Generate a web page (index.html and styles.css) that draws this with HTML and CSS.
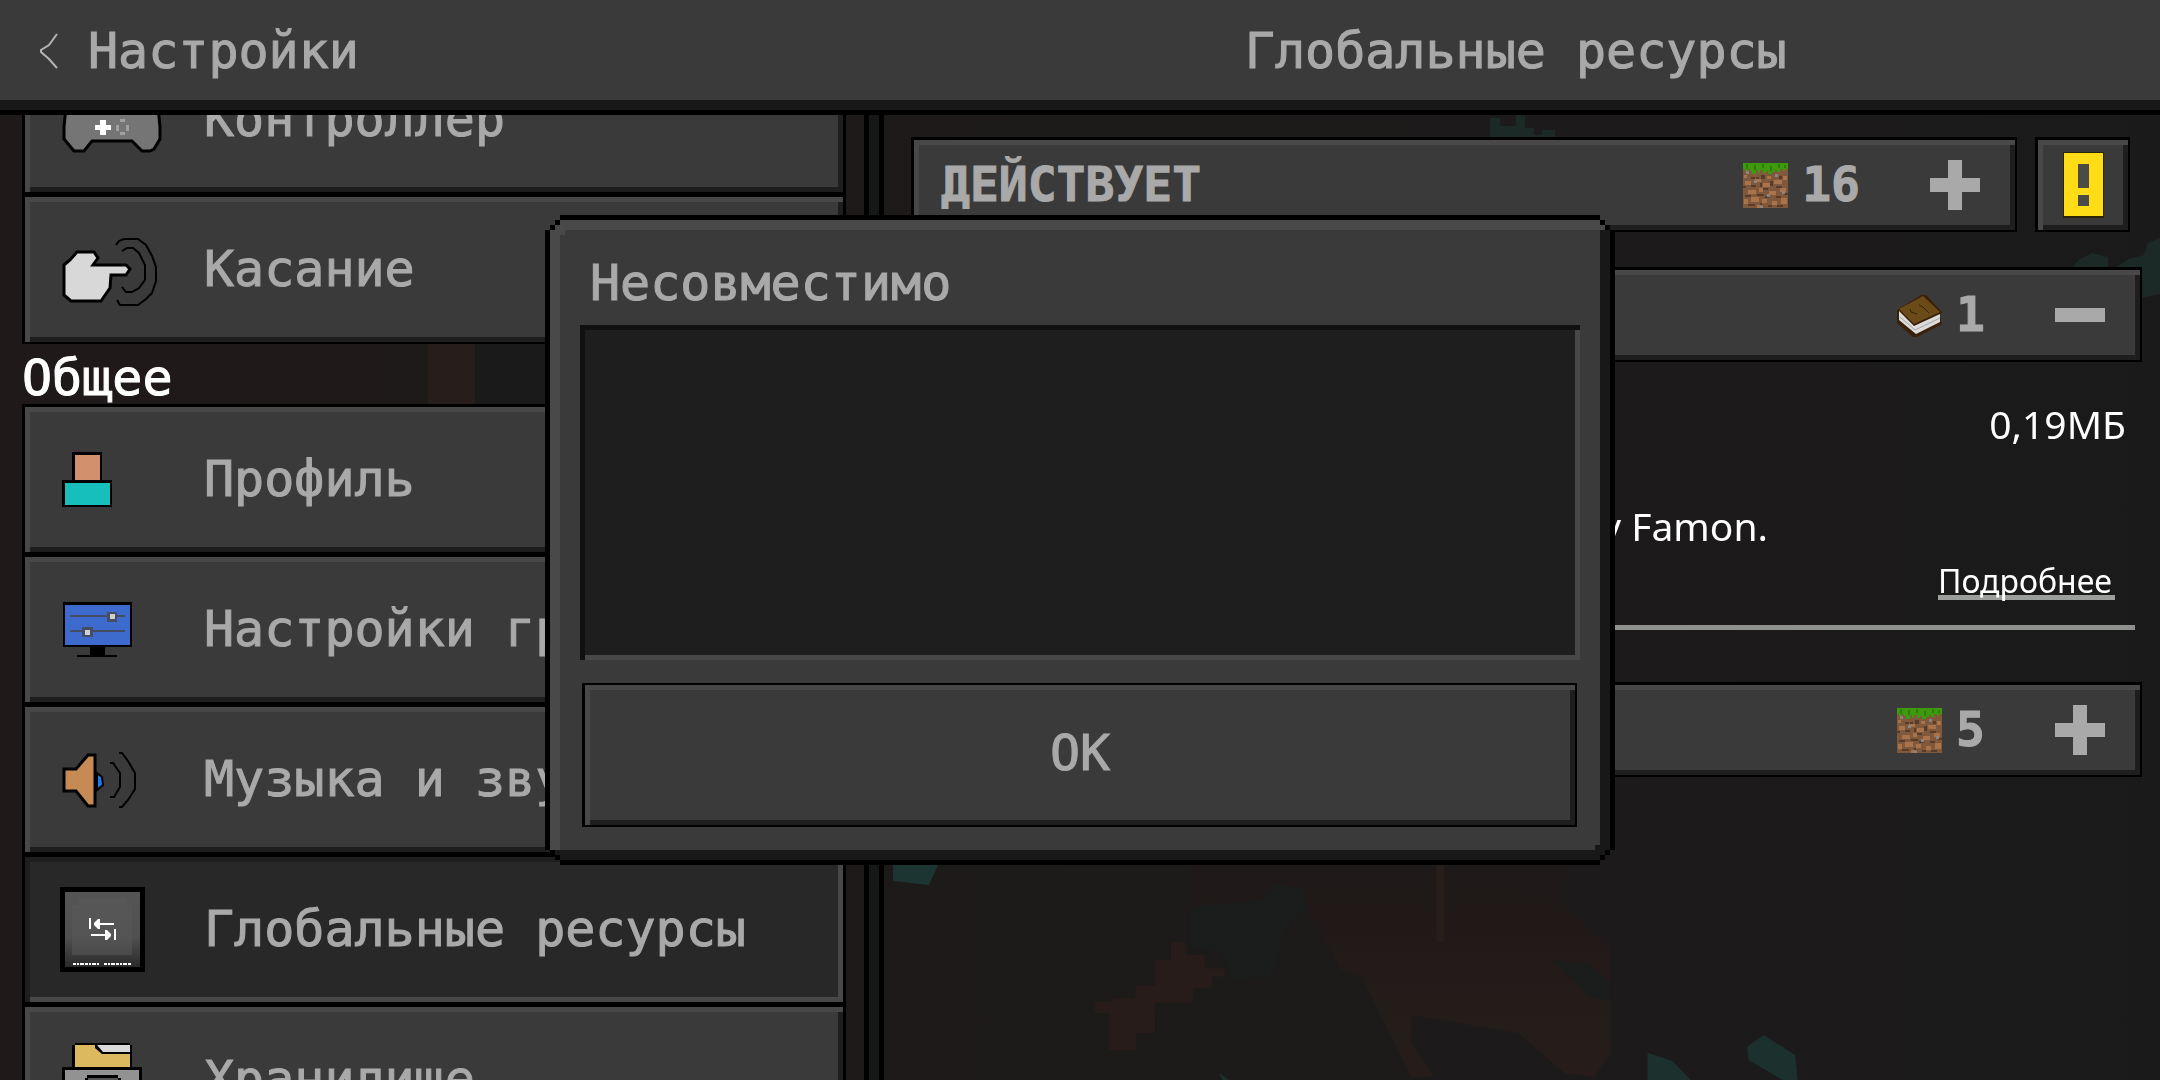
FILE: index.html
```html
<!DOCTYPE html>
<html lang="ru">
<head>
<meta charset="utf-8">
<meta name="viewport" content="width=device-width, initial-scale=1">
<title>Настройки</title>
<link rel="stylesheet" href="styles.css">
</head>
<body>
<svg class="defs" aria-hidden="true">
  <symbol id="grass" viewBox="0 0 45 45" shape-rendering="crispEdges">
    <path fill="#80583c" d="M0 0h45v45H0z"/>
    <path fill="#a9744c" d="M2 18h6v4H2zM12 16h6v3h-6zM20 20h7v4h-7zM31 17h8v4h-8zM5 27h8v4H5zM16 25h4v4h-4zM26 28h7v4h-7zM37 25h6v4h-6zM1 36h4v5H1zM8 34h8v5H8zM19 36h5v4h-5zM29 38h5v4h-5zM38 35h6v6h-6zM14 42h5v3h-5zM24 13h4v3h-4zM1 12h3v3H1zM40 13h4v4h-4z"/>
    <path fill="#583b28" d="M0 23h3v2H0zM8 22h5v2H8zM17 20h2v4h-2zM13 14h3v2h-3zM27 18h3v5h-3zM20 25h5v2h-5zM33 23h6v2h-6zM2 32h6v2H2zM14 31h7v2h-7zM22 33h5v2h-5zM33 33h5v2h-5zM41 30h4v2h-4zM5 41h7v2H5zM17 40h2v2h-2zM25 42h4v2h-4zM34 42h6v2h-6zM8 14h4v2H8zM18 12h4v4h-4zM36 13h3v3h-3z"/>
    <path fill="#8a8580" d="M3 8h3v3H3zM11 17h3v3h-3zM32 11h3v3h-3zM24 31h3v3h-3zM39 28h3v3h-3zM17 43h3v2h-3z"/>
    <path fill="#3d9a0c" d="M0 0h45v6h-3v2h-2V6h-3v3h-3V7h-2v2h-3v2h-4V8h-2v2h-3V7h-3v3h-2V7h-2v4h-4V8H7V6H5v2H2V6H0z"/>
    <path fill="#2f7d06" d="M3 1h2v5H3zM11 2h2v5h-2zM19 1h2v4h-2zM27 3h2v5h-2zM35 1h2v4h-2zM41 2h2v3h-2z"/>
  </symbol>
  <symbol id="plus" viewBox="0 0 50 50"><path fill="#a9a9a9" d="M18 0h14v18h18v14H32v18H18V32H0V18h18z"/></symbol>
  <symbol id="minus" viewBox="0 0 50 50"><path fill="#a9a9a9" d="M0 18h50v14H0z"/></symbol>
</svg>

<svg class="backdrop" viewBox="0 0 2160 1080" preserveAspectRatio="xMidYMid slice" aria-hidden="true">
  <defs>
    <linearGradient id="sky" x1="0" x2="1" y1="0" y2="0"><stop offset="0" stop-color="#201919"/><stop offset=".2" stop-color="#1e1919"/><stop offset=".5" stop-color="#1d1a1a"/><stop offset="1" stop-color="#1b1a1a"/></linearGradient>
    <linearGradient id="glow" x1="0" x2="0" y1="0" y2="1"><stop offset="0" stop-color="#1e1919"/><stop offset=".45" stop-color="#231a19"/><stop offset=".7" stop-color="#231d1a"/><stop offset="1" stop-color="#271c1a"/></linearGradient>
  </defs>
  <path fill="url(#sky)" d="M0 0h2160v1080H0z"/>
  <path fill="#1b1a1a" d="M475 344h75v62h-75z"/>
  <path fill="#271d1a" d="M428 344h47v62h-47z"/>
  <g fill="#1b2927">
    <path d="M1490 118h10v8h16v-11h9v13h9v7h8v-5h13v10h-65z"/>
    <path d="M2072 267l8-8 12-6 16 4v10zM2117 267l12-8 15-4 4-12 12-5v56l-18 4-3-30z"/>
    <path fill="#1d3532" d="M893 860h47l-11 25-36-4z"/>
  </g>
  <g transform="translate(860 780) scale(.829 .3333)">
    <path fill="url(#glow)" d="M400 255H850V380L905 500V820L885 890 850 880 795 760 665 705V790L692 890H665L605 590 580 570 540 380 395 400Z"/>
    <path fill="#1b1d1c" d="M398 380l85-20 20-50 35 20v60l-25 50-15 150-50 10-10-80-40-20zM835 540l45 10 25 60v50l-25-10z"/>
    <path fill="#271c1a" d="M375 485h18v40h23v40h24v25h-15v35h-23v43h-46v92h-23v50h-32V700h-18v-35h22v-10h27v-38h24v-77h19z"/>
    <path fill="#271d1a" d="M695 255h10v230h-10z"/>
    <path fill="#1c312e" d="M950 818l30 25 22 57h-52zM1070 800l20-35 38 60 3 75h-18l-41-60zM433 878l12 22h-8z"/>
  </g>
</svg>

<header class="topbar">
  <button class="back" type="button">
    <svg class="chevron" viewBox="0 0 18 36" aria-hidden="true"><path d="M17 1L9 12 1 17v2l8 7 8 9" /></svg>
    <span>Настройки</span>
  </button>
  <h1 class="topbar-title">Глобальные ресурсы</h1>
</header>

<main class="panels">
  <nav class="sidebar">
    <ul class="menu menu-scrolled">
      <li><button class="item" type="button">
        <svg class="item-icon" viewBox="0 0 100 105" aria-hidden="true">
          <path fill="#757575" stroke="#000" stroke-width="3" d="M4 40Q10 28 24 28H76Q90 28 96 40L98 60V72L92 82 88 84H80L70 74 30 74 22 84H12L2 72V60z"/>
          <path fill="#fff" d="M38 53h6v5h5v5h-5v5h-6v-5h-5v-5h5z"/>
          <path fill="#a0a0a0" d="M58 52h5v3h-5zM58 65h5v3h-5zM54 58h3v6h-3zM64 58h3v6h-3z"/>
        </svg>
        <span class="item-label">Контроллер</span></button></li>
      <li><button class="item" type="button">
        <svg class="item-icon" viewBox="0 0 100 105" aria-hidden="true">
          <path fill="#d8d8d8" stroke="#000" stroke-width="3" d="M2 48l6-5 7-8h17l4 6-5 7h33l4 4-4 6H49l-1 13-9 13H9l-7-6z"/>
          <path fill="none" stroke="#000" stroke-width="2" d="M60 34l5-3h6l6 5 6 12v15l-6 8-7 4h-6l-4-5M54 28l3-4 5-2h14l8 6 6 11 4 11v14l-4 12-6 6-8 6H58l-3-5"/>
        </svg>
        <span class="item-label">Касание</span></button></li>
    </ul>
    <h2 class="group-title">Общее</h2>
    <ul class="menu">
      <li><button class="item" type="button">
        <svg class="item-icon" viewBox="0 0 100 105" aria-hidden="true">
          <path d="M10 25h30v28h10v27H0V53h10z"/><path fill="#d3906d" d="M13 28h25v25H13z"/><path fill="#17bfbc" d="M3 56h45v22H3z"/>
        </svg>
        <span class="item-label">Профиль</span></button></li>
      <li><button class="item" type="button">
        <svg class="item-icon" viewBox="0 0 100 105" aria-hidden="true">
          <path d="M1 25h69v45H43v8h12v2H15v-2h13v-8H1z"/><path fill="#3c6acd" d="M3 28h65v40H3z"/>
          <path fill="#454d66" d="M8 38h55v2H8zM8 53h55v2H8zM45 35h10v10H45zM20 50h11v10H20z"/>
          <path fill="#d0d0d0" d="M48 37h5v5h-5zM23 53h5v5h-5z"/>
        </svg>
        <span class="item-label">Настройки графики</span></button></li>
      <li><button class="item" type="button">
        <svg class="item-icon" viewBox="0 0 100 105" aria-hidden="true">
          <path fill="#c68a55" stroke="#000" stroke-width="3" d="M2 42h12l12-14h7v51h-7L14 64H2z"/>
          <path fill="#1d7bf0" stroke="#000" stroke-width="2" d="M35 46l5 4 1 8-6 5z"/>
          <path fill="none" stroke="#000" stroke-width="2" d="M48 36h3l7 10v14l-6 10h-4M57 26h3l6 8 7 12v16l-7 11-6 7h-3"/>
        </svg>
        <span class="item-label">Музыка и звук</span></button></li>
      <li><button class="item item-selected" type="button" aria-current="page">
        <svg class="item-icon" viewBox="0 0 100 105" aria-hidden="true">
          <defs><linearGradient id="pack" x1="0" x2="0" y1="0" y2="1"><stop offset="0" stop-color="#555"/><stop offset=".6" stop-color="#505050"/><stop offset="1" stop-color="#2a2a2a"/></linearGradient></defs>
          <path d="M-2 10h85v85H-2z"/><path fill="url(#pack)" d="M3 15h75v75H3z"/>
          <path fill="#5a5a5a" opacity=".5" d="M17 22h48v6h5v50H10V28h7z"/>
          <path fill="#fff" d="M27 41h2v11h-2zM32 46l4-4h2v4h14v2H38v4h-2l-4-4zM29 57h14v-4h2l4 4v2l-4 4h-2v-4H29zM52 52h2v11h-2z"/>
          <path fill="none" stroke="#fff" stroke-width="2" stroke-dasharray="3 1 2 1 4 1" d="M11 87h26M42 87h28"/>
        </svg>
        <span class="item-label">Глобальные ресурсы</span></button></li>
      <li><button class="item" type="button">
        <svg class="item-icon" viewBox="0 0 100 105" aria-hidden="true">
          <path d="M13 16h55v2h2v22h10v60H0V40h10V18h3z"/><path fill="#dcb85e" d="M13 18h20v3l7 6h28v13H13z"/><path fill="#dadada" d="M35 18h33v7H41z"/>
          <path fill="#929292" d="M3 43h74v50H3z"/><path d="M25 48h31v3h3v12H23V51h2z"/><path fill="#555" d="M26 51h30v6H26z"/>
        </svg>
        <span class="item-label">Хранилище</span></button></li>
    </ul>
  </nav>

  <div class="divider"></div>

  <section class="content">
    <div class="first-row">
      <button class="bar" type="button">
        <span class="bar-title">ДЕЙСТВУЕТ</span>
        <svg class="bar-icon" aria-hidden="true"><use href="#grass"/></svg>
        <span class="bar-count">16</span>
        <svg class="bar-sign" aria-hidden="true"><use href="#plus"/></svg>
      </button>
      <button class="warning" type="button" aria-label="Предупреждение">
        <svg class="warning-icon" viewBox="0 0 41 66" aria-hidden="true"><path fill="#2b2404" d="M0 0h41v66H0z"/><path fill="#ffdc16" d="M1 1h39v63H1z"/><path fill="#4a4a46" d="M15 12h11v24H15zM15 43h11v11H15z"/></svg>
      </button>
    </div>
    <button class="bar" type="button">
      <span class="bar-title"></span>
      <svg class="bar-icon" viewBox="0 0 45 45" aria-hidden="true">
        <path fill="#3a2008" d="M0 17L24 2h5l16 17-2 4 2 8-25 13h-4L0 30z"/>
        <path fill="#dcdcdc" d="M2 18l15 15 26-12v8L19 41 2 27z"/>
        <path fill="none" stroke="#a5a5a5" stroke-width="1" d="M3 24l15 13 25-12"/>
        <path fill="#6a4a17" d="M2 16L26 3l17 16-26 12z"/>
        <path fill="none" stroke="#3a2008" stroke-width="1" d="M13 16l1 3 6 2M22 12l4 2 6 6"/>
      </svg>
      <span class="bar-count">1</span>
      <svg class="bar-sign" aria-hidden="true"><use href="#minus"/></svg>
    </button>
    <div class="details">
      <p class="size">0,19МБ</p>
      <p class="description">by Famon.</p>
      <a class="more" href="#">Подробнее</a>
    </div>
    <button class="bar" type="button">
      <span class="bar-title"></span>
      <svg class="bar-icon" aria-hidden="true"><use href="#grass"/></svg>
      <span class="bar-count">5</span>
      <svg class="bar-sign" aria-hidden="true"><use href="#plus"/></svg>
    </button>
  </section>
</main>

<div class="overlay">
  <div class="dialog" role="dialog" aria-modal="true" aria-labelledby="dialog-title">
    <div class="dialog-body">
      <h2 class="dialog-title" id="dialog-title">Несовместимо</h2>
      <div class="dialog-list"></div>
      <button class="ok" type="button">OK</button>
    </div>
  </div>
</div>
</body>
</html>
```

FILE: styles.css
```css
:root {
  --face: #3a3a3a;
  --light: #484848;
  --dark: #1e1e1e;
  --text: #a9a9a9;
  --pixel: "DejaVu Sans Mono", "Liberation Mono", monospace;
}

* { box-sizing: border-box; }

body {
  margin: 0;
  height: 100vh;
  display: flex;
  flex-direction: column;
  overflow: hidden;
  background: #1c1a1a;
  color: var(--text);
  font-family: var(--pixel);
  font-size: 50px;
  -webkit-text-stroke: 1px currentColor;
}

h1, h2, p, ul { margin: 0; padding: 0; font-weight: 400; font-size: inherit; }
ul { list-style: none; }

button {
  margin: 0;
  padding: 0;
  border: 0;
  border-radius: 0;
  background: none;
  color: inherit;
  font: inherit;
  text-align: left;
  cursor: pointer;
}

svg { display: block; flex: none; }
.defs { position: absolute; width: 0; height: 0; }
.backdrop { position: fixed; inset: 0; width: 100%; height: 100%; z-index: -1; }

/* Top bar */
.topbar {
  flex: none;
  height: 115px;
  display: grid;
  grid-template-columns: 41% 59%;
  align-items: center;
  line-height: 60px;
  background: var(--face);
  border-bottom: 5px solid #000;
  box-shadow: inset 0 -10px #181818;
  padding-bottom: 8px;
}
.back { display: flex; align-items: center; gap: 30px; padding-left: 40px; }
.chevron { width: 18px; height: 36px; fill: none; stroke: #b4b4b4; stroke-width: 2; }
.topbar-title { text-align: center; padding-right: 14px; }

/* Panels */
.panels { flex: 1; min-height: 0; display: grid; grid-template-columns: 40% 20px 1fr; }
.divider { background: #161717; border: solid #000; border-width: 0 5px; }

.sidebar { overflow: hidden; padding: 0 18px 0 22px; }
.menu {
  display: flex;
  flex-direction: column;
  gap: 5px;
  border: 3px solid #000;
  border-bottom-width: 2px;
  background: #000;
}
.menu-scrolled { margin-top: -71px; }
.item {
  display: flex;
  align-items: center;
  width: 100%;
  height: 145px;
  padding-left: 37px;
  overflow: hidden;
  background: var(--face);
  box-shadow: inset 0 5px var(--light), inset 5px 0 var(--light), inset -5px -5px var(--dark);
}
.item-selected {
  background: #282828;
  box-shadow: inset 0 5px var(--dark), inset 5px 0 var(--dark), inset -5px -5px var(--light);
}
.item-icon { width: 100px; height: 105px; overflow: visible; }
.item-label { padding: 0 0 2px 42px; line-height: 60px; white-space: nowrap; }
.group-title { padding-top: 8px; line-height: 52px; color: #fff; }

.content { overflow: hidden; padding: 22px 18px 0 27px; display: flex; flex-direction: column; }
.first-row { display: flex; gap: 18px; margin: 0 12px 35px 0; }
.bar, .warning {
  display: flex;
  align-items: center;
  height: 95px;
  border: 3px solid #000;
  border-width: 3px 2px 2px 3px;
  background: var(--face);
  box-shadow: inset 0 5px var(--light), inset 5px 0 var(--light), inset -5px -5px var(--dark);
}
.bar { padding: 0 35px 0 27px; font-size: 48px; font-weight: 700; line-height: 56px; }
.first-row .bar { flex: 1; }
.warning { width: 95px; justify-content: center; }
.warning-icon { width: 41px; height: 66px; }
.bar-title, .bar-count { padding-bottom: 2px; }
.bar-title { flex: 1; }
.bar-icon { width: 45px; height: 45px; margin-right: 14px; }
.bar-count { margin-right: 70px; }
.bar-sign { width: 50px; height: 50px; }

.details {
  display: flex;
  flex-direction: column;
  margin: 0 7px 52px 0;
  padding-top: 36px;
  padding-bottom: 25px;
  border-bottom: 5px solid #8f918f;
  font: 39px/52px "Noto Sans", sans-serif;
  color: #fff;
  -webkit-text-stroke: 0;
}
.size { padding-right: 9px; text-align: right; }
.description { margin: 50px 0 10px; padding-left: 667px; }
.more {
  align-self: flex-end;
  margin-right: 20px;
  padding-right: 3px;
  font-size: 32px;
  line-height: 38px;
  color: #fff;
  text-decoration: none;
  box-shadow: inset 0 -5px #9b9e9b;
}

/* Dialog */
.overlay { position: fixed; inset: 0; display: grid; place-items: center; }
.dialog {
  width: min(1070px, 90vw);
  padding: 5px;
  background: #000;
  clip-path: polygon(0 15px, 5px 15px, 5px 10px, 10px 10px, 10px 5px, 15px 5px, 15px 0,
    calc(100% - 15px) 0, calc(100% - 15px) 5px, calc(100% - 10px) 5px, calc(100% - 10px) 10px, calc(100% - 5px) 10px, calc(100% - 5px) 15px, 100% 15px,
    100% calc(100% - 15px), calc(100% - 5px) calc(100% - 15px), calc(100% - 5px) calc(100% - 10px), calc(100% - 10px) calc(100% - 10px), calc(100% - 10px) calc(100% - 5px), calc(100% - 15px) calc(100% - 5px), calc(100% - 15px) 100%,
    15px 100%, 15px calc(100% - 5px), 10px calc(100% - 5px), 10px calc(100% - 10px), 5px calc(100% - 10px), 5px calc(100% - 15px), 0 calc(100% - 15px));
}
.dialog-body {
  display: flex;
  flex-direction: column;
  padding: 33px 30px;
  background:
    linear-gradient(#484948, #484948) 10px 10px / 5px 5px no-repeat,
    linear-gradient(#181818, #181818) calc(100% - 10px) calc(100% - 10px) / 5px 5px no-repeat,
    var(--face);
  box-shadow: inset 0 10px #484948, inset 0 -10px #181818, inset 10px 0 #484948, inset -10px 0 #181818;
  clip-path: polygon(0 10px, 5px 10px, 5px 5px, 10px 5px, 10px 0,
    calc(100% - 10px) 0, calc(100% - 10px) 5px, calc(100% - 5px) 5px, calc(100% - 5px) 10px, 100% 10px,
    100% calc(100% - 10px), calc(100% - 5px) calc(100% - 10px), calc(100% - 5px) calc(100% - 5px), calc(100% - 10px) calc(100% - 5px), calc(100% - 10px) 100%,
    10px 100%, 10px calc(100% - 5px), 5px calc(100% - 5px), 5px calc(100% - 10px), 0 calc(100% - 10px));
}
.dialog-title { padding-left: 10px; margin-bottom: 12px; line-height: 60px; }
.dialog-list {
  height: 335px;
  margin-bottom: 23px;
  background: var(--dark);
  box-shadow: inset 0 5px #101010, inset 5px 0 #101010, inset -5px -5px var(--light);
}
.ok {
  height: 144px;
  margin: 0 3px 0 2px;
  padding-bottom: 4px;
  border: solid #000;
  border-width: 2px 2px 2px 3px;
  background: var(--face);
  box-shadow: inset 0 5px var(--light), inset 5px 0 var(--light), inset -5px -5px var(--dark);
  text-align: center;
}
```
